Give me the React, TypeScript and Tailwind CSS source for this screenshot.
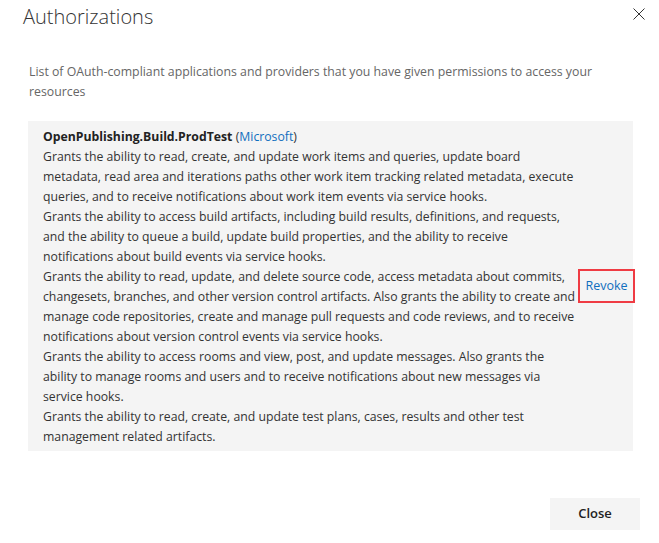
import React from "react";

const lines: string[] = [
  "Grants the ability to read, create, and update work items and queries, update board",
  "metadata, read area and iterations paths other work item tracking related metadata, execute",
  "queries, and to receive notifications about work item events via service hooks.",
  "Grants the ability to access build artifacts, including build results, definitions, and requests,",
  "and the ability to queue a build, update build properties, and the ability to receive",
  "notifications about build events via service hooks.",
  "Grants the ability to read, update, and delete source code, access metadata about commits,",
  "changesets, branches, and other version control artifacts. Also grants the ability to create and",
  "manage code repositories, create and manage pull requests and code reviews, and to receive",
  "notifications about version control events via service hooks.",
  "Grants the ability to access rooms and view, post, and update messages. Also grants the",
  "ability to manage rooms and users and to receive notifications about new messages via",
  "service hooks.",
  "Grants the ability to read, create, and update test plans, cases, results and other test",
  "management related artifacts.",
];

export default function App() {
  return (
    <div
      className="w-[659px] h-[543px] bg-white relative overflow-hidden text-[#333333]"
      style={{ fontFamily: '"Open Sans", "Noto Sans", sans-serif' }}
    >
      <div className="flex items-start justify-between pl-[23px] pr-[13px] pt-[3px]">
        <h1 className="text-[20px] font-light leading-[28px] text-[#333333]">Authorizations</h1>
        <button className="mt-[4px] w-[14px] h-[14px] flex items-center justify-center">
          <svg width="12" height="12" viewBox="0 0 12 12">
            <path d="M0.5 0.5 L11.5 11.5 M11.5 0.5 L0.5 11.5" stroke="#333" strokeWidth="1" />
          </svg>
        </button>
      </div>

      <p className="ml-[29px] mt-[31px] w-[600px] text-[12.3px] leading-[20px] text-[#666666]">
        <span className="block whitespace-nowrap">
          List of OAuth-compliant applications and providers that you have given permissions to access your
        </span>
        <span className="block">resources</span>
      </p>

      <div className="ml-[28px] mt-[19px] w-[605px] bg-[#f4f4f4] flex items-center">
        <div className="pl-[15px] pt-[6px] pb-[4px] text-[12.25px] leading-[20px] w-[550px]">
          <div className="whitespace-nowrap">
            <span className="font-bold text-[#222222]">OpenPublishing.Build.ProdTest</span>{" "}
            <span className="text-[#333333]">
              (<span className="text-[#106ebe]">Microsoft</span>)
            </span>
          </div>
          {lines.map((l, i) => (
            <div key={i} className="whitespace-nowrap">
              {l}
            </div>
          ))}
        </div>
        <div className="flex-1 flex justify-end">
          <div className="mr-[-2px] w-[57px] h-[34px] border-2 border-[#ef3b43] flex items-center justify-center text-[12.5px] text-[#106ebe]">
            Revoke
          </div>
        </div>
      </div>

      <div className="flex justify-end pr-[19px] mt-[47px]">
        <button className="w-[90px] h-[32px] bg-[#f4f4f4] text-[13px] font-semibold text-[#222222]">
          Close
        </button>
      </div>
    </div>
  );
}
